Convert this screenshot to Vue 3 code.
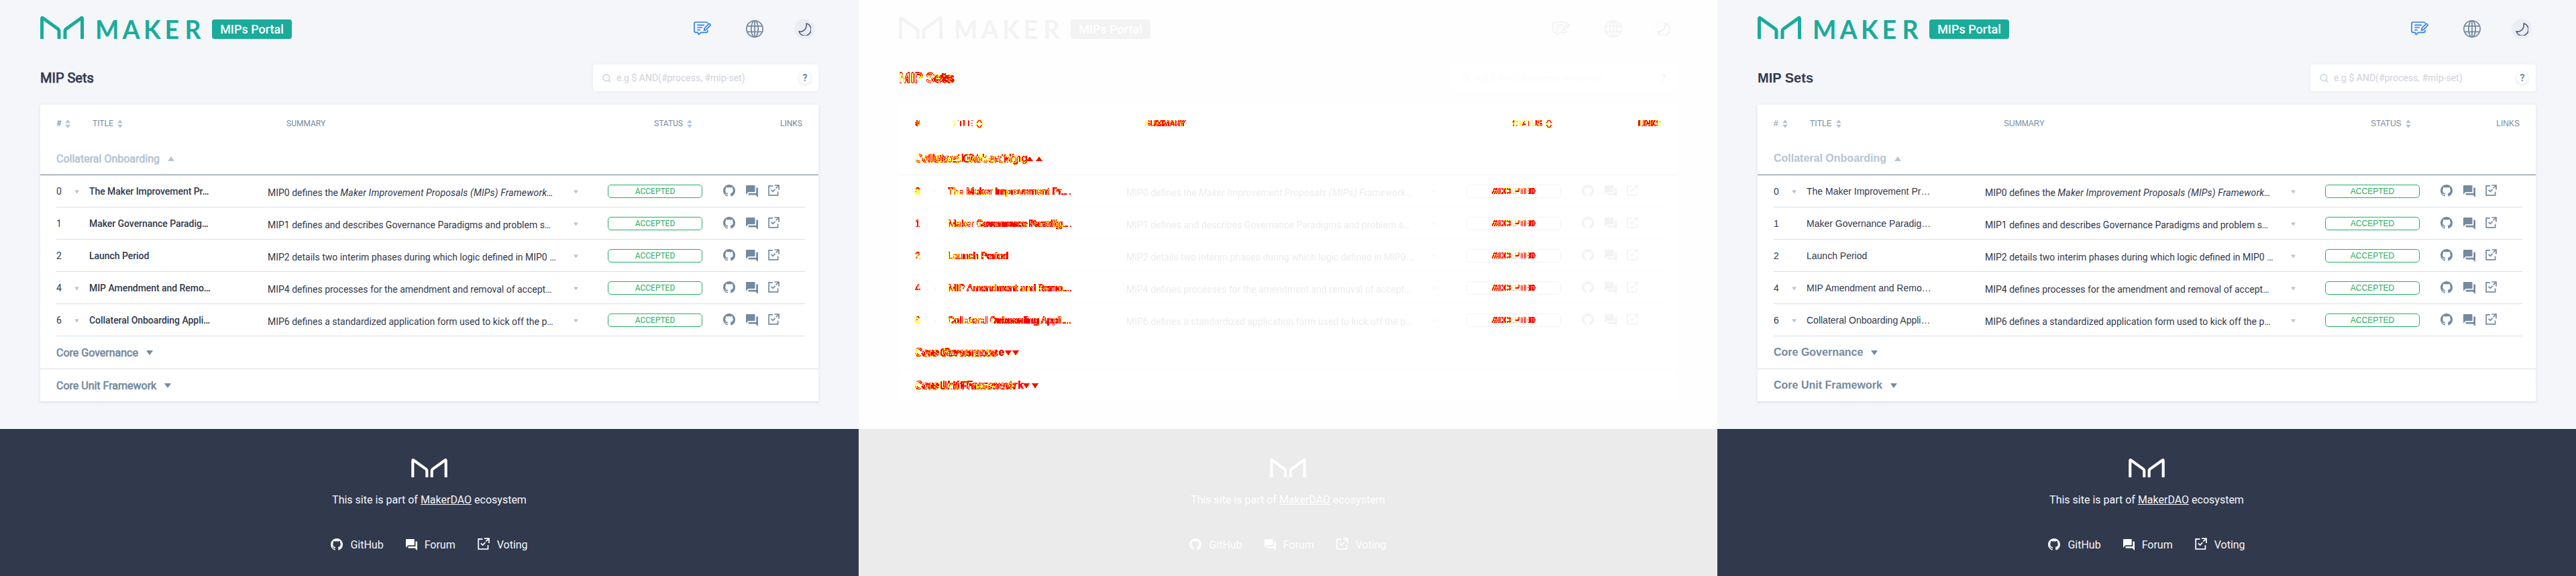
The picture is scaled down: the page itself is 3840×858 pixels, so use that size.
<script setup>
const columns = [
  { id: 'before', layers: [{ kind: 'plain', variants: ['roboto'] }] },
  {
    id: 'diff',
    layers: [
      { kind: 'ghost', variants: ['roboto'] },
      { kind: 'diff', variants: ['roboto', 'arial'] },
    ],
  },
  { id: 'after', layers: [{ kind: 'plain', variants: ['arial'] }] },
]

const rows = [
  { id: 0, sub: true, title: 'The Maker Improvement Pr…', lead: 'MIP0 defines the ', em: 'Maker Improvement Proposals (MIPs) Framework…' },
  { id: 1, sub: false, title: 'Maker Governance Paradig…', lead: 'MIP1 defines and describes Governance Paradigms and problem s…', em: '' },
  { id: 2, sub: false, title: 'Launch Period', lead: 'MIP2 details two interim phases during which logic defined in MIP0 …', em: '' },
  { id: 4, sub: true, title: 'MIP Amendment and Remo…', lead: 'MIP4 defines processes for the amendment and removal of accept…', em: '' },
  { id: 6, sub: true, title: 'Collateral Onboarding Appli…', lead: 'MIP6 defines a standardized application form used to kick off the p…', em: '' },
]
const closedGroups = ['Core Governance', 'Core Unit Framework']
</script>

<template>
  <main class="board">
    <svg class="defs" width="0" height="0" aria-hidden="true">
      <filter id="changed" x="0" y="0" width="100%" height="100%" color-interpolation-filters="sRGB">
        <feColorMatrix type="matrix" values=".9 .9 .9 0 0  .9 .9 .9 0 0  .9 .9 .9 0 0  .9 .9 .9 0 0" />
        <feComponentTransfer>
          <feFuncR type="discrete" tableValues="1 1" />
          <feFuncG type="discrete" tableValues="1 1 1 1 0 0 0 0 0 0" />
          <feFuncB type="discrete" tableValues="0 0" />
          <feFuncA type="discrete" tableValues="0 1 1 1 1 1 1 1 1 1" />
        </feComponentTransfer>
      </filter>
      <symbol id="mark" viewBox="0 0 65 34">
        <path d="M2.5 34V3.6Q2.6 2 4 3L26.6 19.2Q28 20.3 28 22V34M37 34V22Q37 20.3 38.4 19.2L61 3Q62.4 2 62.5 3.6V34" fill="none" stroke="currentColor" stroke-width="5" />
      </symbol>
      <symbol id="github" viewBox="0 0 16 16">
        <path fill="currentColor" d="M8 0C3.58 0 0 3.58 0 8c0 3.54 2.29 6.53 5.47 7.59.4.07.55-.17.55-.38 0-.19-.01-.82-.01-1.49-2.01.37-2.53-.49-2.69-.94-.09-.23-.48-.94-.82-1.13-.28-.15-.68-.52-.01-.53.63-.01 1.08.58 1.23.82.72 1.21 1.87.87 2.33.66.07-.52.28-.87.51-1.07-1.78-.2-3.64-.89-3.64-3.95 0-.87.31-1.59.82-2.15-.08-.2-.36-1.02.08-2.12 0 0 .67-.21 2.2.82.64-.18 1.32-.27 2-.27.68 0 1.36.09 2 .27 1.53-1.04 2.2-.82 2.2-.82.44 1.1.16 1.92.08 2.12.51.56.82 1.27.82 2.15 0 3.07-1.87 3.75-3.65 3.95.29.25.54.73.54 1.48 0 1.07-.01 1.93-.01 2.2 0 .21.15.46.55.38A8.013 8.013 0 0016 8c0-4.42-3.58-8-8-8z" />
      </symbol>
      <symbol id="forum" viewBox="2 2 20 20">
        <path fill="currentColor" d="M21 6h-2v9H6v2c0 .55.45 1 1 1h11l4 4V7c0-.55-.45-1-1-1zm-4 6V3c0-.55-.45-1-1-1H3c-.55 0-1 .45-1 1v14l4-4h10c.55 0 1-.45 1-1z" />
      </symbol>
      <symbol id="vote" viewBox="0 0 17 17">
        <path d="M7 1.9H1.1V15.9H14.6V10.5M9.4 1H16V7.6M16 1L11.6 5.4M4.6 7.8L7.2 10.4L10.6 6.8" fill="none" stroke="currentColor" stroke-width="1.7" />
      </symbol>
      <symbol id="sort" viewBox="0 0 8 13">
        <path d="M4 .3L7.8 5.3H.2zM4 12.7L.2 7.7H7.8z" fill="#b4c1d3" />
      </symbol>
      <symbol id="down" viewBox="0 0 10 7"><path d="M0 0H10L5 7z" fill="currentColor" /></symbol>
      <symbol id="note" viewBox="0 0 26 21">
        <g fill="none" stroke="#2f80ed" stroke-width="1.7" stroke-linecap="round" stroke-linejoin="round">
          <path d="M21 2.2Q20 1 18.6 1H3.4Q1 1 1 3.4V14Q1 16.4 3.4 16.4H6.4L7.4 19.6L11 16.4H18.6Q21 16.4 21 14V13.4M6 5.4H15.4M6 9H12.4M6 12.6H9" />
          <path d="M15.6 13.2L16.2 10L22.2 3.8Q23.4 3 24.4 4T24.6 6.2L18.4 12.4z" />
        </g>
      </symbol>
      <symbol id="globe" viewBox="0 0 26 26">
        <g fill="none" stroke="#748aa1" stroke-width="1.8">
          <circle cx="13" cy="13" r="12.1" /><ellipse cx="13" cy="13" rx="5.2" ry="12.1" />
          <path d="M13 1V25M1.6 8.8H24.4M1.6 17.4H24.4" />
        </g>
      </symbol>
      <symbol id="moon" viewBox="0 0 19 19">
        <path d="M12 1A9.2 9.2 0 1 1 1 12.6C6 14.6 13.4 10 12 1z" fill="none" stroke="#4b5575" stroke-width="1.5" stroke-linejoin="round" />
      </symbol>
      <symbol id="search" viewBox="0 0 13 13">
        <g fill="none" stroke="#d1dbe5" stroke-width="1.8"><circle cx="5.8" cy="5.8" r="4.8" /><path d="M9.2 9.2L12.4 12.4" /></g>
      </symbol>
    </svg>

    <section v-for="col in columns" :key="col.id" class="column">
      <div v-for="layer in col.layers" :key="layer.kind" class="layer" :class="layer.kind">
        <div v-for="variant in layer.variants" :key="variant" class="pane" :class="variant">
          <header class="top">
            <svg class="mark"><use href="#mark" /></svg>
            <svg class="wordmark" width="160" height="35"><text x="-2 38.4 70 101.6 131.6" y="34">MAKER</text></svg>
            <span class="portal">MIPs Portal</span>
            <div class="tools">
              <svg class="i-note"><use href="#note" /></svg>
              <svg class="i-globe"><use href="#globe" /></svg>
              <span class="moon"><svg><use href="#moon" /></svg></span>
            </div>
          </header>
          <div class="bar">
            <h1 class="swap">MIP Sets</h1>
            <div class="search">
              <svg><use href="#search" /></svg>
              <span class="hint">e.g $ AND(#process, #mip-set)</span>
              <span class="help">?</span>
            </div>
          </div>
          <div class="card">
            <div class="thead swap">
              <span class="c-num"># <svg class="sort"><use href="#sort" /></svg></span>
              <span class="c-title">TITLE <svg class="sort"><use href="#sort" /></svg></span>
              <span class="c-sum">SUMMARY</span>
              <span class="c-status">STATUS <svg class="sort"><use href="#sort" /></svg></span>
              <span class="c-links">LINKS</span>
            </div>
            <div class="group open swap">Collateral Onboarding <svg><use href="#down" /></svg></div>
            <div v-for="row in rows" :key="row.id" class="row">
              <span class="num swap">{{ row.id }}</span>
              <span class="sub"><svg v-if="row.sub" class="caret"><use href="#down" /></svg></span>
              <span class="title swap">{{ row.title }}</span>
              <span class="summary">{{ row.lead }}<em v-if="row.em">{{ row.em }}</em></span>
              <svg class="caret"><use href="#down" /></svg>
              <span class="status swap">ACCEPTED</span>
              <span class="links">
                <svg class="l-git"><use href="#github" /></svg>
                <svg class="l-forum"><use href="#forum" /></svg>
                <svg class="l-vote"><use href="#vote" /></svg>
              </span>
            </div>
            <div v-for="name in closedGroups" :key="name" class="group swap">{{ name }} <svg><use href="#down" /></svg></div>
          </div>
          <footer>
            <svg class="fmark"><use href="#mark" /></svg>
            <p>This site is part of <u>MakerDAO</u> ecosystem</p>
            <nav>
              <a><svg class="f-git"><use href="#github" /></svg>GitHub</a>
              <a><svg class="f-forum"><use href="#forum" /></svg>Forum</a>
              <a><svg class="f-vote"><use href="#vote" /></svg>Voting</a>
            </nav>
          </footer>
        </div>
      </div>
    </section>
  </main>
</template>

<style>
html, body { margin: 0; height: 858px; overflow: hidden; background: #f5f6fa; }
</style>

<style scoped>
* { box-sizing: border-box; }
.board { display: grid; grid-template-columns: repeat(3, 1280px); height: 858px; overflow: hidden; }
.defs { position: absolute; }
svg { display: block; flex: none; }
.column { display: grid; background: #fff; height: 858px; overflow: hidden; }
.layer { grid-area: 1 / 1; display: grid; isolation: isolate; }
.layer.ghost { filter: grayscale(1) opacity(.1); }
.layer.diff { filter: url(#changed); }
.pane { grid-area: 1 / 1; width: 1280px; height: 858px; background: #f5f6fa; color: #31394d; font-family: Roboto, sans-serif; display: flex; flex-direction: column; }
.layer.diff .pane + .pane { mix-blend-mode: difference; }
.arial .swap { font-family: "Liberation Sans", Arial, sans-serif; }

.top { height: 96px; flex: none; padding: 24px 0 0 60px; display: flex; align-items: flex-start; color: #1aab9b; }
.mark { width: 65px; height: 34px; }
.wordmark { margin-left: 19px; overflow: visible; }
.wordmark text { font: 700 37.5px Lato, sans-serif; fill: #1aab9b; }
.portal { width: 119px; height: 29px; margin: 5px 0 0 12px; border-radius: 4px; background: #1aab9b; color: #fff; font-size: 18px; font-weight: 500; line-height: 29px; text-align: center; }
.tools { display: flex; margin: 4px 66px 0 auto; height: 30px; align-items: center; }
.i-note { width: 26px; height: 21px; margin: -2px 52px 0 0; }
.i-globe { width: 26px; height: 26px; margin-right: 46px; }
.moon { width: 30px; height: 30px; border-radius: 50%; background: #ebedf4; display: grid; place-items: center; }
.moon svg { width: 19px; height: 19px; }

.bar { height: 60px; flex: none; padding: 0 60px; display: flex; justify-content: space-between; }
h1 { margin: 0; font-size: 20px; line-height: 40px; font-weight: 700; }
.roboto h1 { font-weight: 400; -webkit-text-stroke: .75px currentColor; }
.search { width: 336px; height: 40px; padding: 0 11px 0 14px; background: #fff; border-radius: 4px; box-shadow: 0 1px 4px rgba(90, 110, 170, .09); display: flex; align-items: center; }
.search svg { width: 13px; height: 13px; }
.hint { margin-left: 8px; font-size: 14px; color: #d0d3d9; }
.help { width: 18px; height: 18px; margin-left: auto; border-radius: 50%; box-shadow: 0 1px 4px rgba(70, 90, 120, .18); color: #748aa1; font-size: 14px; font-weight: 700; line-height: 18px; text-align: center; }

.card { width: 1160px; height: 443px; flex: none; margin-left: 60px; background: #fff; box-shadow: 0 1px 5px rgba(90, 110, 170, .12); }
.thead { height: 56px; padding-left: 24px; display: flex; color: #748aa1; font-size: 12px; line-height: 56px; }
.thead span { display: flex; align-items: center; height: 56px; }
.sort { width: 8px; height: 13px; margin-left: 6px; }
.c-num { width: 54px; }
.c-title { width: 289px; }
.c-sum { width: 548px; }
.arial .c-sum { width: 547px; }
.c-status { flex: none; }
.c-links { margin: 0 24px 0 auto; }
.group { height: 49px; padding-left: 24px; border-bottom: 1px solid #dadee2; display: flex; align-items: center; color: #748aa1; font-size: 16px; font-weight: 700; }
.roboto .group { font-weight: 400; -webkit-text-stroke: .65px currentColor; }
.group svg { width: 10px; height: 7px; margin-left: 12px; }
.group.open { color: #b6c4d6; border-color: #6a7c91; }
.group.open svg { transform: rotate(180deg); }
.row { height: 48px; margin: 0 20px 0 24px; border-bottom: 1px solid #dadee2; display: flex; align-items: center; font-size: 14px; }
.num { width: 27px; flex: none; }
.sub { width: 22px; flex: none; }
.caret { width: 7px; height: 6px; margin-top: 3px; color: #b6c4d6; }
.title { width: 266px; flex: none; white-space: nowrap; }
.roboto .title { font-weight: 500; letter-spacing: -.05px; }
.summary { width: 456px; flex: none; margin-top: 4px; white-space: nowrap; font-size: 14px; }
.summary em { letter-spacing: .17px; }
.summary + .caret { margin-right: 44px; }
.status { width: 141px; height: 20px; border: 1px solid #27ae60; border-radius: 5px; color: #27ae60; font-size: 12px; line-height: 18px; text-align: center; }
.links { display: flex; margin-left: 31px; color: #748aa1; }
.l-git { width: 18px; height: 18px; }
.l-forum { width: 18px; height: 18px; margin: 1px 0 0 16px; }
.l-vote { width: 17px; height: 17px; margin-left: 15px; }

footer { height: 219px; flex: none; margin-top: 40px; background: #31394d; color: #f5f6fa; display: flex; flex-direction: column; align-items: center; font-size: 16px; }
.fmark { width: 54px; height: 28px; margin-top: 44px; color: #fff; }
p { margin: 24px 0 0; line-height: 20px; }
nav { display: flex; margin-top: 46px; }
nav a { display: flex; align-items: center; height: 20px; }
.f-git { width: 18px; height: 18px; margin-right: 11px; }
.f-forum { width: 17px; height: 17px; margin: 0 11px 0 33px; color: #fff; }
.f-vote { width: 18px; height: 18px; margin: -2px 11px 0 33px; }
</style>
